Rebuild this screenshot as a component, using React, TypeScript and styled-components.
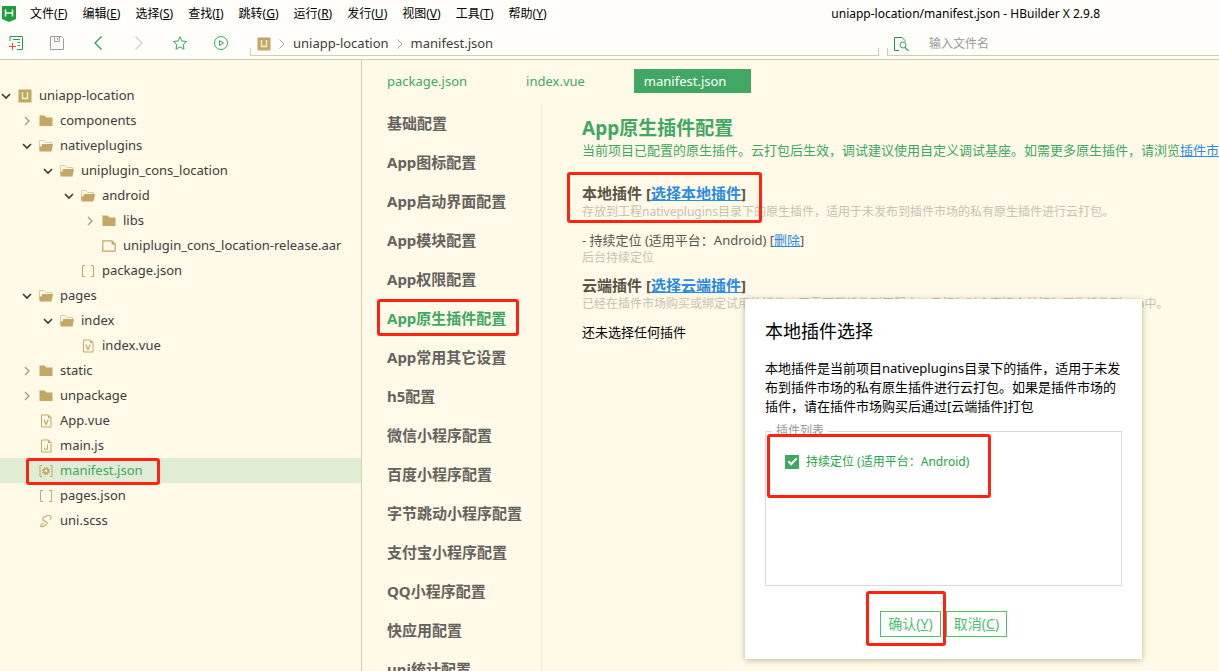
import React from "react";
import styled, { createGlobalStyle, css } from "styled-components";

const c = {
  paper: "#fff9e8",
  chrome: "#fffefa",
  line: "#d6cfa5",
  green: "#41a863",
  brown: "#c2a766",
  text: "#403d38",
  link: "#2b8be0",
  hint: "#c6c2b4",
  red: "#ff2312",
};

const GlobalStyle = createGlobalStyle`
  *, *::before, *::after { box-sizing: border-box; }
  body {
    margin: 0;
    overflow: hidden;
    background: ${c.paper};
    color: ${c.text};
    font-family: "Noto Sans", "Noto Sans CJK SC", sans-serif;
    font-size: 13px;
  }
  button, input { font: inherit; color: inherit; }
  button { border: 0; padding: 0; background: none; cursor: pointer; }
  ul { list-style: none; margin: 0; padding: 0; }
  h1, h2, p { margin: 0; }
  svg { display: block; flex: none; }
`;

const Shell = styled.div`
  display: flex;
  flex-direction: column;
  height: 100vh;
`;

const MenuBar = styled.header`
  display: flex;
  align-items: center;
  height: 27px;
  padding: 0 119px 0 2px;
  background: ${c.chrome};
  color: #000;
`;

const Menus = styled.nav`
  display: flex;
  gap: 15px;
  margin-left: 14px;
`;

const MenuButton = styled.button`
  font-size: 12px;
  line-height: 20px;
  white-space: nowrap;
`;

const WindowTitle = styled.div`
  margin-left: auto;
  font-size: 12px;
  white-space: nowrap;
`;

const Toolbar = styled.div`
  display: flex;
  align-items: center;
  height: 33px;
  padding-left: 9px;
  background: ${c.chrome};
  border-bottom: 1px solid ${c.line};
`;

const Tools = styled.div`
  display: flex;
  gap: 27px;
  margin-right: 22px;
`;

const trough = css`
  position: relative;
  display: flex;
  align-items: center;
  align-self: flex-end;
  height: 24px;
  margin-bottom: 3px;
  border-bottom: 1px solid ${c.line};
  &::before {
    content: "";
    position: absolute;
    left: 0;
    bottom: 0;
    height: 7px;
    border-left: 1px solid ${c.line};
  }
`;

const Address = styled.div`
  ${trough}
  flex: 1;
  gap: 8px;
  padding-left: 7px;
  line-height: 17px;
  &::after {
    content: "";
    position: absolute;
    right: 0;
    bottom: 0;
    height: 7px;
    border-right: 1px solid ${c.line};
  }
`;

const Search = styled.label`
  ${trough}
  width: 332px;
  margin-left: 8px;
  padding-left: 7px;
  gap: 20px;
`;

const SearchInput = styled.input`
  flex: 1;
  min-width: 0;
  border: 0;
  padding: 0;
  outline: 0;
  background: none;
  font-size: 12px;
  &::placeholder { color: #999; opacity: 1; }
`;

const Body = styled.div`
  display: flex;
  flex: 1;
  min-height: 0;
`;

const Sidebar = styled.aside`
  flex: none;
  width: 362px;
  padding-top: 23px;
  border-right: 1px solid ${c.line};
`;

const TreeItem = styled.li`
  position: relative;
`;

const TreeRow = styled.button<{ $level: number; $active?: boolean }>`
  display: flex;
  align-items: center;
  width: 100%;
  height: 25px;
  padding-left: ${(p) => p.$level * 21}px;
  background: ${(p) => (p.$active ? "#e0ecd3" : "transparent")};
  color: ${(p) => (p.$active ? c.green : c.text)};
`;

const Twist = styled.span`
  width: 18px;
  padding-left: 1px;
`;

const Label = styled.span`
  margin-left: 7px;
  padding-bottom: 1px;
  line-height: 18px;
`;

const Main = styled.main`
  display: flex;
  flex-direction: column;
  flex: 1;
  min-width: 0;
`;

const Tabs = styled.div`
  display: flex;
  flex: none;
  height: 44px;
  padding: 9px 15px 11px;
`;

const Tab = styled.button<{ $active?: boolean }>`
  min-width: 117px;
  height: 24px;
  padding: 0 ${(p) => (p.$active ? 24 : 49)}px 0 10px;
  text-align: left;
  background: ${(p) => (p.$active ? c.green : "transparent")};
  color: ${(p) => (p.$active ? "#fff" : c.green)};
`;

const Editor = styled.div`
  display: flex;
  flex: 1;
  min-height: 0;
`;

const Sections = styled.ul`
  flex: none;
  width: 180px;
  padding-left: 25px;
  border-right: 1px solid #f0e9d8;
`;

const Section = styled.li`
  position: relative;
`;

const SectionLink = styled.a<{ $active?: boolean }>`
  display: block;
  font-size: 15px;
  font-weight: 700;
  line-height: 39px;
  white-space: nowrap;
  text-decoration: none;
  color: ${(p) => (p.$active ? c.green : "#66625c")};
`;

const Content = styled.section`
  flex: 1;
  min-width: 0;
  padding: 11px 0 0 40px;
  overflow: hidden;
  white-space: nowrap;
`;

const Heading = styled.h1`
  font-size: 19px;
  line-height: 26px;
  color: ${c.green};
`;

const Intro = styled.p`
  line-height: 19px;
  color: ${c.green};
`;

const Block = styled.div<{ $gap: number }>`
  position: relative;
  margin-top: ${(p) => p.$gap}px;
`;

const SubHeading = styled.h2`
  font-size: 15px;
  line-height: 21px;
  color: #5a5345;
`;

const Link = styled.a`
  color: ${c.link};
  text-decoration: underline;
`;

const Hint = styled.p`
  font-size: 12px;
  line-height: 16px;
  color: ${c.hint};
`;

const Entry = styled.p<{ $empty?: boolean }>`
  margin-top: 10px;
  line-height: 20px;
  color: ${(p) => (p.$empty ? "#000" : "#5a5750")};
`;

const Dialog = styled.div`
  position: absolute;
  top: 299px;
  left: 745px;
  width: 397px;
  padding: 19px 20px 22px;
  background: #fff;
  box-shadow: 0 1px 6px rgba(90, 80, 40, 0.4);
  color: #000;
`;

const DialogTitle = styled.h2`
  font-size: 18px;
  font-weight: 400;
  line-height: 27px;
`;

const DialogText = styled.p`
  margin-top: 14px;
  line-height: 19px;
`;

const Group = styled.fieldset`
  height: 163px;
  margin: 7px 0 25px;
  padding: 0;
  border: 1px solid #dadada;
`;

const Legend = styled.legend`
  margin-left: 6px;
  padding: 0 4px;
  font-size: 12px;
  line-height: 16px;
  color: #999;
`;

const PluginList = styled.div`
  position: relative;
  height: 148px;
  margin-top: -5px;
  padding: 19px;
  background: #fff;
`;

const Check = styled.label`
  display: flex;
  align-items: center;
  gap: 7px;
  font-size: 12px;
  line-height: 18px;
  color: #24a546;
`;

const CheckBox = styled.input`
  appearance: none;
  display: grid;
  place-items: center;
  width: 14px;
  height: 14px;
  margin: 0;
  background: ${c.green};
  &:checked::after {
    content: "";
    width: 9px;
    height: 5px;
    margin-bottom: 3px;
    border: solid #fff;
    border-width: 0 0 2px 2px;
    transform: rotate(-45deg);
  }
`;

const Actions = styled.div`
  display: flex;
  justify-content: center;
  gap: 5px;
`;

const ActionSlot = styled.div`
  position: relative;
`;

const Action = styled.button`
  min-width: 61px;
  height: 26px;
  padding: 0 6px;
  border: 1px solid #4dc06c;
  color: #4dc06c;
  font-size: 14px;
  line-height: 24px;
`;

/* Red outline that marks a step of the walkthrough. */
const Mark = styled.span<{ $x: number; $y: number; $w: number; $h: number }>`
  position: absolute;
  z-index: 2;
  left: ${(p) => p.$x}px;
  top: ${(p) => p.$y}px;
  width: ${(p) => p.$w}px;
  height: ${(p) => p.$h}px;
  border: 3px solid ${c.red};
  border-radius: 3px;
  pointer-events: none;
`;

const Logo = () => (
  <svg width="14" height="16" viewBox="0 0 14 16">
    <path d="M0 0h14v13l-7 3-7-3z" fill="#1e9e3a" />
    <path d="M3.5 3.5v7M10.5 3.5v7M3.5 7h7" stroke="#e8ffe8" strokeWidth="1.6" fill="none" />
  </svg>
);

const toolIcons: Record<string, React.ReactNode> = {
  新建: (
    <>
      <path d="M1 5V.5h12.500v13H8M4 3.500h7M8.500 6.500h2.500M8.500 9.500h2.500" stroke="#279a50" />
      <path d="M3.500 7v7M0 10.500h7" stroke="#e2502f" />
    </>
  ),
  保存: <path d="M.5.5h11l2 2v11H.5zM4.500.5v5h5v-5M7.500 2v2" stroke="#9c9c9c" />,
  后退: <path d="M10.500.500L4 7l6.500 6.500" stroke="#279a50" strokeWidth="1.200" />,
  前进: <path d="M3.500.500L10 7l-6.500 6.500" stroke="#cfcfcf" strokeWidth="1.200" />,
  收藏: <path d="M7 .8l1.900 4.200 4.600.5-3.400 3.100.9 4.600L7 10.900l-4 2.300.9-4.600L.5 5.500l4.600-.5z" stroke="#35a862" />,
  运行: (
    <>
      <circle cx="7" cy="7" r="6.500" stroke="#35a862" />
      <path d="M5.500 4.500v5L9.500 7z" stroke="#35a862" />
    </>
  ),
};

const ToolIcon = ({ name }: { name: string }) => (
  <svg width="14" height="14" viewBox="0 0 14 14" fill="none" overflow="visible">
    {toolIcons[name]}
  </svg>
);

const Crumb = () => (
  <svg width="6" height="10" viewBox="0 0 6 10" fill="none">
    <path d="M.5.5L5 5 .5 9.500" stroke="#aaa79c" />
  </svg>
);

const ProjectIcon = () => (
  <svg width="14" height="14" viewBox="0 0 14 14">
    <path d="M.5.5h13v13H.5z" fill={c.brown} />
    <path d="M4.500 3v6.500h5V3" stroke="#fff3cf" strokeWidth="1.300" fill="none" />
  </svg>
);

const fileIcons: Record<string, React.ReactNode> = {
  folder: <path d="M.5 1.500h5l2 2h6V12H.5z" fill={c.brown} />,
  open: (
    <>
      <path d="M.5 11V1.500h4.500l1.500 2h6V5" stroke="#dccd9f" fill="none" />
      <path d="M3 5h11l-1.500 7.500H.5V7.500h2z" fill={c.brown} />
    </>
  ),
  file: (
    <>
      <path d="M.8 1.800h9l3.400 3.200v7.200H.8z" stroke={c.brown} strokeWidth="1.200" fill="none" />
      <path d="M9.500 1.500v4h4z" fill={c.brown} />
    </>
  ),
  json: <path d="M4 1.500H1.500v11H4M10 1.500h2.500v11H10" stroke={c.brown} fill="none" />,
  vue: (
    <>
      <path d="M2.500 1h7l2.500 2.500V13H2.500z" stroke={c.brown} fill="none" />
      <path d="M9 1v3h3z" fill={c.brown} />
      <path d="M4.800 5.500L7 10.500l2.300-5" stroke={c.brown} strokeWidth="1.200" fill="none" />
    </>
  ),
  js: (
    <>
      <path d="M2.500 1h7l2.500 2.500V13H2.500z" stroke={c.brown} fill="none" />
      <path d="M9 1v3h3z" fill={c.brown} />
      <path d="M8.500 5.500v4.800H5.500V8.800" stroke={c.brown} fill="none" />
    </>
  ),
  manifest: (
    <>
      <path d="M3 1.500H1v11h2M11 1.500h2v11h-2" stroke={c.brown} fill="none" />
      <circle cx="7" cy="7" r="2.300" stroke={c.brown} strokeWidth="1.800" fill="none" />
      <circle cx="7" cy="7" r="3.700" stroke={c.brown} strokeWidth="1" strokeDasharray="1.500 1.400" fill="none" />
    </>
  ),
  scss: (
    <path
      d="M11 5.500c2-1.500 1.500-4-1-4-3 0-6.500 2-6.500 3.800S9 7.500 8 9.500 3 13 2 12.500s.5-2.500 3-3.200"
      stroke={c.brown}
      strokeWidth="1.100"
      fill="none"
    />
  ),
};

const FileIcon = ({ kind }: { kind: string }) =>
  kind === "project" ? (
    <ProjectIcon />
  ) : (
    <svg width="14" height="14" viewBox="0 0 14 14">
      {fileIcons[kind]}
    </svg>
  );

const Arrow = ({ open }: { open: boolean }) => (
  <svg width="10" height="10" viewBox="0 0 10 10" fill="none">
    {open ? (
      <path d="M1 3l4 4 4-4" stroke="#3e3a33" strokeWidth="1.600" />
    ) : (
      <path d="M3 1l4 4-4 4" stroke="#a09a86" strokeWidth="1.300" />
    )}
  </svg>
);

const SearchIcon = () => (
  <svg width="15" height="14" viewBox="0 0 15 14" fill="none">
    <path d="M5 13.500H.5V.5h7.500l3 3V4.500" stroke="#159a50" />
    <circle cx="9" cy="8" r="3" stroke="#35a862" />
    <path d="M11 10.500l3.500 3.500" stroke="#35a862" strokeWidth="1.300" />
  </svg>
);

const menus: [string, string][] = [
  ["文件", "F"], ["编辑", "E"], ["选择", "S"], ["查找", "I"], ["跳转", "G"],
  ["运行", "R"], ["发行", "U"], ["视图", "V"], ["工具", "T"], ["帮助", "Y"],
];

type Node = { name: string; kind: string; level: number; open?: boolean };

const tree: Node[] = [
  { name: "uniapp-location", kind: "project", level: 0, open: true },
  { name: "components", kind: "folder", level: 1, open: false },
  { name: "nativeplugins", kind: "open", level: 1, open: true },
  { name: "uniplugin_cons_location", kind: "open", level: 2, open: true },
  { name: "android", kind: "open", level: 3, open: true },
  { name: "libs", kind: "folder", level: 4, open: false },
  { name: "uniplugin_cons_location-release.aar", kind: "file", level: 4 },
  { name: "package.json", kind: "json", level: 3 },
  { name: "pages", kind: "open", level: 1, open: true },
  { name: "index", kind: "open", level: 2, open: true },
  { name: "index.vue", kind: "vue", level: 3 },
  { name: "static", kind: "folder", level: 1, open: false },
  { name: "unpackage", kind: "folder", level: 1, open: false },
  { name: "App.vue", kind: "vue", level: 1 },
  { name: "main.js", kind: "js", level: 1 },
  { name: "manifest.json", kind: "manifest", level: 1 },
  { name: "pages.json", kind: "json", level: 1 },
  { name: "uni.scss", kind: "scss", level: 1 },
];

const sections = [
  "基础配置", "App图标配置", "App启动界面配置", "App模块配置", "App权限配置",
  "App原生插件配置", "App常用其它设置", "h5配置", "微信小程序配置", "百度小程序配置",
  "字节跳动小程序配置", "支付宝小程序配置", "QQ小程序配置", "快应用配置", "uni统计配置",
];

export default function App() {
  return (
    <Shell>
      <GlobalStyle />
      <MenuBar>
        <Logo />
        <Menus>
          {menus.map(([name, key]) => (
            <MenuButton key={key}>
              {name}(<u>{key}</u>)
            </MenuButton>
          ))}
        </Menus>
        <WindowTitle>uniapp-location/manifest.json - HBuilder X 2.9.8</WindowTitle>
      </MenuBar>
      <Toolbar>
        <Tools>
          {Object.keys(toolIcons).map((name) => (
            <button key={name} aria-label={name}>
              <ToolIcon name={name} />
            </button>
          ))}
        </Tools>
        <Address>
          <ProjectIcon />
          <Crumb />
          <span>uniapp-location</span>
          <Crumb />
          <span>manifest.json</span>
        </Address>
        <Search>
          <SearchIcon />
          <SearchInput placeholder="输入文件名" />
        </Search>
      </Toolbar>

      <Body>
        <Sidebar>
          <ul>
            {tree.map((node, i) => {
              const active = node.kind === "manifest";
              return (
                <TreeItem key={i}>
                  <TreeRow $level={node.level} $active={active}>
                    <Twist>{node.open !== undefined && <Arrow open={node.open} />}</Twist>
                    <FileIcon kind={node.kind} />
                    <Label>{node.name}</Label>
                  </TreeRow>
                  {active && <Mark $x={26} $y={0} $w={134} $h={27} />}
                </TreeItem>
              );
            })}
          </ul>
        </Sidebar>

        <Main>
          <Tabs>
            <Tab>package.json</Tab>
            <Tab>index.vue</Tab>
            <Tab $active>manifest.json</Tab>
          </Tabs>
          <Editor>
            <Sections>
              {sections.map((name) => {
                const active = name === "App原生插件配置";
                return (
                  <Section key={name}>
                    <SectionLink href="#" $active={active}>{name}</SectionLink>
                    {active && <Mark $x={-10} $y={0} $w={142} $h={37} />}
                  </Section>
                );
              })}
            </Sections>
            <Content>
              <Heading>App原生插件配置</Heading>
              <Intro>
                当前项目已配置的原生插件。云打包后生效，调试建议使用自定义调试基座。如需更多原生插件，请浏览<Link href="#">插件市场</Link>
              </Intro>
              <Block $gap={23}>
                <SubHeading>
                  本地插件 [<Link href="#">选择本地插件</Link>]
                </SubHeading>
                <Hint>存放到工程nativeplugins目录下的原生插件，适用于未发布到插件市场的私有原生插件进行云打包。</Hint>
                <Entry>
                  - 持续定位 (适用平台：Android) [<Link href="#">删除</Link>]
                </Entry>
                <Hint>后台持续定位</Hint>
              </Block>
              <Block $gap={9}>
                <SubHeading>
                  云端插件 [<Link href="#">选择云端插件</Link>]
                </SubHeading>
                <Hint>已经在插件市场购买或绑定试用的插件，无需下载插件到工程中，云打包时会直接合并打包原生插件到App中。</Hint>
                <Entry $empty>还未选择任何插件</Entry>
              </Block>
            </Content>
          </Editor>
        </Main>
      </Body>

      <Mark $x={567} $y={172} $w={195} $h={51} />

      <Dialog role="dialog" aria-labelledby="dialog-title">
        <DialogTitle id="dialog-title">本地插件选择</DialogTitle>
        <DialogText>
          本地插件是当前项目nativeplugins目录下的插件，适用于未发布到插件市场的私有原生插件进行云打包。如果是插件市场的插件，请在插件市场购买后通过[云端插件]打包
        </DialogText>
        <Group>
          <Legend>插件列表</Legend>
          <PluginList>
            <Check>
              <CheckBox type="checkbox" defaultChecked />
              持续定位 (适用平台：Android)
            </Check>
            <Mark $x={1} $y={0} $w={224} $h={64} />
          </PluginList>
        </Group>
        <Actions>
          <ActionSlot>
            <Action>
              确认(<u>Y</u>)
            </Action>
            <Mark $x={-14} $y={-20} $w={80} $h={55} />
          </ActionSlot>
          <Action>
            取消(<u>C</u>)
          </Action>
        </Actions>
      </Dialog>
    </Shell>
  );
}
